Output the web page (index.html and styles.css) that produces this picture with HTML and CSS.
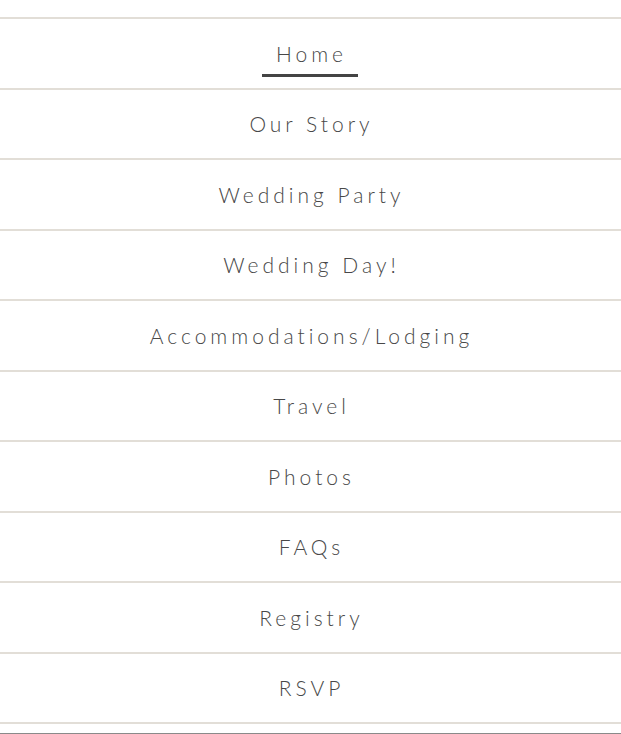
FILE: index.html
```html
<!DOCTYPE html>
<html>
<head>
<title>Menu</title>
<link rel="stylesheet" href="styles.css">
</head>
<body>
<div class="menu">
<ul class="nav">
<li class="nav-item active"><a href="#">Home</a></li>
<li class="nav-item"><a href="#">Our Story</a></li>
<li class="nav-item"><a href="#">Wedding Party</a></li>
<li class="nav-item"><a href="#">Wedding Day!</a></li>
<li class="nav-item"><a href="#">Accommodations/Lodging</a></li>
<li class="nav-item"><a href="#">Travel</a></li>
<li class="nav-item"><a href="#">Photos</a></li>
<li class="nav-item"><a href="#">FAQs</a></li>
<li class="nav-item"><a href="#">Registry</a></li>
<li class="nav-item"><a href="#">RSVP</a></li>
</ul>
<div class="menu-foot"></div>
</div>
</body>
</html>
```

FILE: styles.css
```css
/* Mobile menu list */

body
{ margin: 0;
background-color: #ffffff;
font-family: "Lato", "Open Sans", sans-serif;
}

div.menu
{ padding-top: 17px;
height: 734px;
box-sizing: border-box;
display: flex;
flex-direction: column;
}

ul.nav
{ list-style: none;
margin: 0;
padding: 0;
border-top: 2px solid #e2ded7;
}

li.nav-item
{ height: 68.5px;
border-bottom: 2px solid #e2ded7;
display: flex;
align-items: center;
justify-content: center;
}

li.nav-item a
{ position: relative;
color: #484848;
text-decoration: none;
font-size: 21px;
font-weight: 300;
letter-spacing: 4px;
padding-left: 2px;
}

li.active a::after
{ content: "";
position: absolute;
left: -12px;
right: -11px;
bottom: -11px;
height: 3px;
background-color: #444444;
}

div.menu-foot
{ flex: 1;
border-bottom: 1px solid #8a8a8a;
}
```
